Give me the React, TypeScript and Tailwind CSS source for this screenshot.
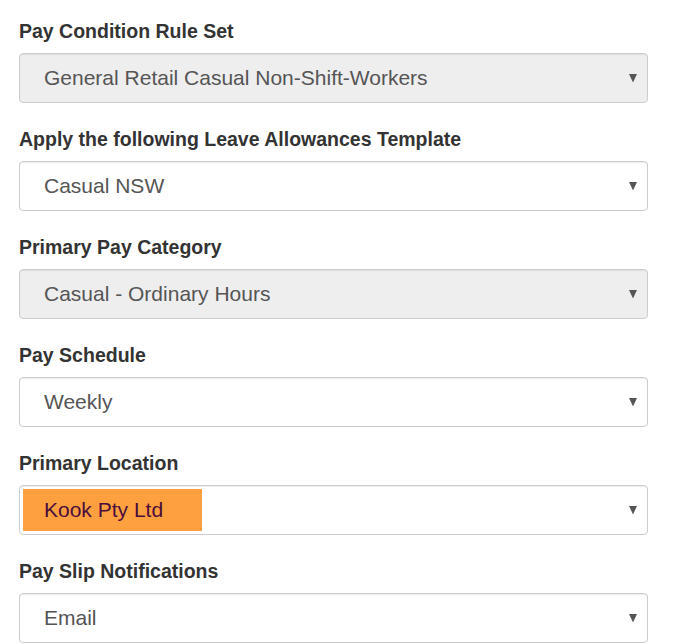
import React from "react";

const Arrow = () => (
  <svg width="8" height="9" viewBox="0 0 8 9" className="absolute right-[10px] top-1/2 -translate-y-1/2">
    <path d="M0 0.5 H8 L4 9 Z" fill="#555" />
  </svg>
);

type F = { label: string; value: string; disabled?: boolean; highlight?: boolean };

const fields: F[] = [
  { label: "Pay Condition Rule Set", value: "General Retail Casual Non-Shift-Workers", disabled: true },
  { label: "Apply the following Leave Allowances Template", value: "Casual NSW" },
  { label: "Primary Pay Category", value: "Casual - Ordinary Hours", disabled: true },
  { label: "Pay Schedule", value: "Weekly" },
  { label: "Primary Location", value: "Kook Pty Ltd", highlight: true },
  { label: "Pay Slip Notifications", value: "Email" },
];

export default function App() {
  return (
    <div
      className="w-[699px] h-[644px] overflow-hidden bg-white pl-[19px] pt-[18px]"
      style={{ fontFamily: '"Liberation Sans", Arial, sans-serif' }}
    >
      <div className="flex w-[629px] flex-col gap-[23px]">
        {fields.map((f) => (
          <div key={f.label} className="flex flex-col">
            <div className="h-[26px] mb-[9px] text-[19.5px] leading-[26px] font-bold text-[#333]">{f.label}</div>
            <div
              className={
                "relative h-[50px] rounded-[4px] border border-[#ccc] shadow-[inset_0_1px_1px_rgba(0,0,0,0.075)] flex items-center " +
                (f.disabled ? "bg-[#eee]" : "bg-white")
              }
            >
              {f.highlight ? (
                <span className="ml-[3px] flex h-[42px] w-[179px] items-center bg-[#ffa040] pl-[21px] text-[21px] text-[#4b0d3c]">
                  {f.value}
                </span>
              ) : (
                <span className="pl-[24px] text-[21px] text-[#555]">{f.value}</span>
              )}
              <Arrow />
            </div>
          </div>
        ))}
      </div>
    </div>
  );
}
